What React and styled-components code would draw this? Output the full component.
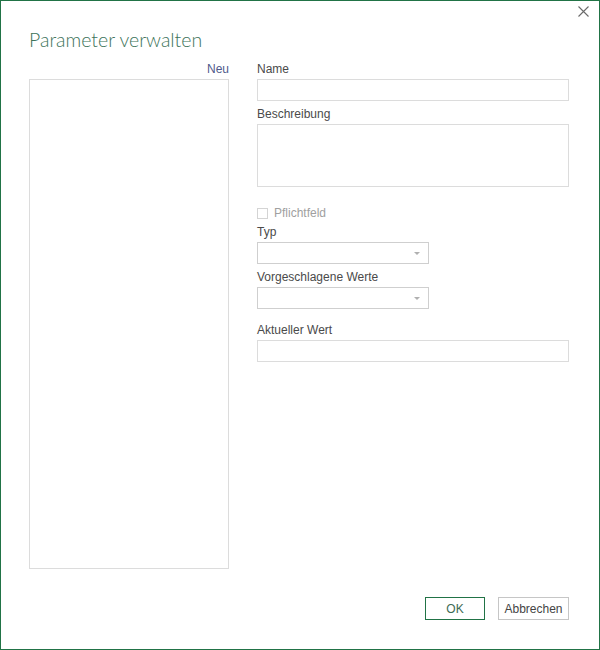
import React from 'react'
import styled, { createGlobalStyle } from 'styled-components'

const GlobalStyle = createGlobalStyle`
    html, body {
        margin: 0;
        padding: 0;
        background: #ffffff;
    }
    * {
        box-sizing: border-box;
    }
`

function App() {
    return (
        <Window>
            <GlobalStyle />
            <TitleBar>
                <CloseButton aria-label="Schließen">
                    <svg width="11" height="11" viewBox="0 0 11 11">
                        <path d="M0.5 0.5 L10.5 10.5 M10.5 0.5 L0.5 10.5" stroke="#6a6a6a" strokeWidth="1.1" fill="none" />
                    </svg>
                </CloseButton>
            </TitleBar>
            <Title>Parameter verwalten</Title>
            <Body>
                <LeftColumn>
                    <NewLink>Neu</NewLink>
                    <ListBox />
                </LeftColumn>
                <RightColumn>
                    <Label>Name</Label>
                    <TextInput />
                    <Label $top={6}>Beschreibung</Label>
                    <TextArea />
                    <CheckRow>
                        <CheckBox />
                        <CheckLabel>Pflichtfeld</CheckLabel>
                    </CheckRow>
                    <Label $top={4}>Typ</Label>
                    <Select>
                        <Arrow />
                    </Select>
                    <Label $top={6}>Vorgeschlagene Werte</Label>
                    <Select>
                        <Arrow />
                    </Select>
                    <Label $top={14}>Aktueller Wert</Label>
                    <TextInput />
                </RightColumn>
            </Body>
            <Footer>
                <Button $width={60} $primary>OK</Button>
                <Button $width={71}>Abbrechen</Button>
            </Footer>
        </Window>
    )
}

export default App

const Window = styled.div`
    width: 600px;
    height: 650px;
    border: 1px solid #217346;
    display: flex;
    flex-direction: column;
    background: #ffffff;
    font-family: "Segoe UI", "Liberation Sans", Arial, sans-serif;
    font-size: 12px;
    color: #444444;
`
const TitleBar = styled.div`
    display: flex;
    justify-content: flex-end;
    padding: 5px 10px 0 0;
    height: 19px;
`
const CloseButton = styled.div`
    width: 11px;
    height: 11px;
    display: flex;
    svg {
        display: block;
    }
`
const Title = styled.div`
    padding-left: 28px;
    margin-top: 7px;
    font-family: "Segoe UI Light", Lato, "Open Sans", sans-serif;
    font-weight: 300;
    font-size: 19.5px;
    line-height: 26px;
    color: #3d735a;
`
const Body = styled.div`
    display: grid;
    grid-template-columns: 200px 312px;
    column-gap: 28px;
    padding-left: 28px;
    margin-top: 9px;
`
const LeftColumn = styled.div`
    display: flex;
    flex-direction: column;
`
const NewLink = styled.div`
    text-align: right;
    line-height: 15px;
    height: 15px;
    margin-bottom: 2px;
    color: #4f5a8c;
    cursor: pointer;
`
const ListBox = styled.div`
    height: 490px;
    border: 1px solid #dcdcdc;
`
const RightColumn = styled.div`
    display: flex;
    flex-direction: column;
    align-items: flex-start;
`
const Label = styled.div`
    line-height: 15px;
    margin-top: ${p => p.$top || 0}px;
    margin-bottom: 2px;
    color: #4a4a4a;
`
const TextInput = styled.div`
    width: 312px;
    height: 22px;
    border: 1px solid #dcdcdc;
`
const TextArea = styled.div`
    width: 312px;
    height: 63px;
    border: 1px solid #dcdcdc;
`
const CheckRow = styled.div`
    display: flex;
    align-items: center;
    gap: 6px;
    margin-top: 19px;
    height: 15px;
`
const CheckBox = styled.div`
    width: 11px;
    height: 11px;
    border: 1px solid #d4d4d4;
`
const CheckLabel = styled.span`
    color: #a0a0a0;
    line-height: 15px;
`
const Select = styled.div`
    width: 172px;
    height: 22px;
    border: 1px solid #cfcfcf;
    display: flex;
    align-items: center;
    justify-content: flex-end;
    padding-right: 8px;
`
const Arrow = styled.span`
    width: 0;
    height: 0;
    border-left: 3px solid transparent;
    border-right: 3px solid transparent;
    border-top: 3px solid #b0b0b0;
`
const Footer = styled.div`
    margin-top: auto;
    display: flex;
    justify-content: flex-end;
    gap: 13px;
    padding: 0 30px 29px 0;
`
const Button = styled.div`
    height: 23px;
    width: ${p => p.$width}px;
    display: flex;
    align-items: center;
    justify-content: center;
    border: 1px solid ${p => (p.$primary ? '#217346' : '#c6c6c6')};
    color: ${p => (p.$primary ? '#3d6b55' : '#444444')};
    font-size: 12px;
`
